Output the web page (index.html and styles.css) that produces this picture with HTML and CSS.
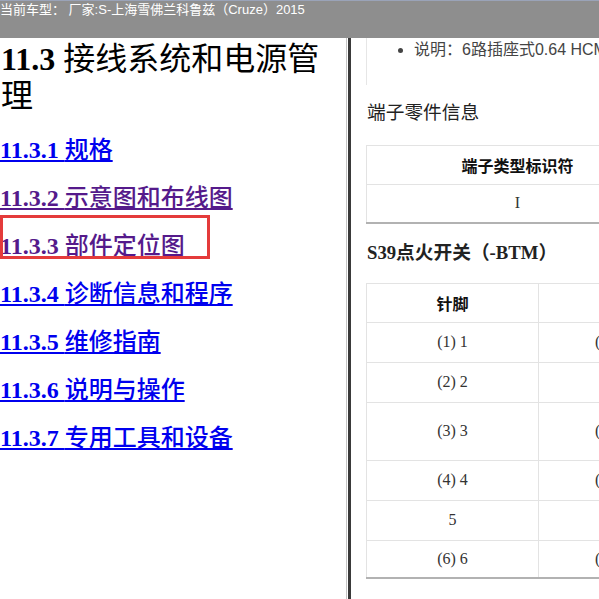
FILE: index.html
```html
<!DOCTYPE html>
<html lang="zh-CN">
<head>
    <meta charset="UTF-8">
    <title>维修手册 - 11.3 接线系统和电源管理</title>
    <link rel="stylesheet" href="styles.css">
</head>
<body>

    <div class="topbar">当前车型： 厂家:S-上海雪佛兰科鲁兹（Cruze）2015</div>

    <div class="main">
        <div class="left">
            <h1>11.3 <span class="zh">接线系统和电源管理</span></h1>
            <h2><a href="#" class="link">11.3.1 <span class="zh">规格</span></a></h2>
            <h2><a href="#" class="link visited">11.3.2 <span class="zh">示意图和布线图</span></a></h2>
            <h2><a href="#" class="link visited">11.3.3 <span class="zh">部件定位图</span></a></h2>
            <h2><a href="#" class="link">11.3.4 <span class="zh">诊断信息和程序</span></a></h2>
            <h2><a href="#" class="link">11.3.5 <span class="zh">维修指南</span></a></h2>
            <h2><a href="#" class="link">11.3.6 <span class="zh">说明与操作</span></a></h2>
            <h2><a href="#" class="link">11.3.7 <span class="zh">专用工具和设备</span></a></h2>

            <div class="mark"></div>
        </div>

        <div class="splitter"></div>

        <div class="right">
            <div class="spec">
                <ul>
                    <li>说明：6路插座式0.64 HCM 密封型连接器</li>
                </ul>
            </div>

            <h3 class="part-title">端子零件信息</h3>
            <table class="terminals">
                <thead>
                    <tr class="row-h">
                        <th class="c1">端子类型标识符</th>
                        <th>选装件</th>
                    </tr>
                </thead>
                <tbody>
                    <tr class="row-last">
                        <td>I</td>
                        <td>-</td>
                    </tr>
                </tbody>
            </table>

            <h3 class="conn-title">S39点火开关（-BTM）</h3>
            <table class="pins">
                <thead>
                    <tr class="row-h">
                        <th class="c1">针脚</th>
                        <th>线路</th>
                    </tr>
                </thead>
                <tbody>
                    <tr class="row">
                        <td>(1) 1</td>
                        <td class="desc">(5) 0.35</td>
                    </tr>
                    <tr class="row">
                        <td>(2) 2</td>
                        <td></td>
                    </tr>
                    <tr class="row-tall">
                        <td>(3) 3</td>
                        <td class="desc">(5) 0.5</td>
                    </tr>
                    <tr class="row">
                        <td>(4) 4</td>
                        <td class="desc">(5) 0.35</td>
                    </tr>
                    <tr class="row">
                        <td>5</td>
                        <td></td>
                    </tr>
                    <tr class="row-last">
                        <td>(6) 6</td>
                        <td class="desc">(5) 0.35</td>
                    </tr>
                </tbody>
            </table>
        </div>
    </div>

</body>
</html>
```

FILE: styles.css
```css
/* General */
* {
    box-sizing: border-box;
}

body {
    margin: 0;
    height: 599px;
    overflow: hidden;
    background: #ffffff;
    font-family: "Liberation Serif", "Noto Sans CJK SC", serif;
}

/* Top bar */
.topbar {
    height: 38px;
    background-color: #8e8e8e;
    border-top: 1px solid #9aa3b8;
    color: #ffffff;
    font-family: "Liberation Sans", "Noto Sans CJK SC", sans-serif;
    font-size: 13px;
    line-height: 15px;
    padding-top: 1px;
    white-space: nowrap;
}

.main {
    display: flex;
    height: 561px;
}

/* Left pane - chapter menu */
.left {
    position: relative;
    width: 347px;
    flex-shrink: 0;
    padding-top: 3px;
    border-right: 1px solid #c4c4c4;
}

h1 {
    margin: 0 0 21px;
    font-size: 32px;
    line-height: 37px;
    font-weight: bold;
    color: #000;
    padding-left: 1px;
}

h1 .zh {
    font-weight: normal;
}

h2 {
    margin: 20px 0;
    font-size: 24px;
    line-height: 28px;
    font-weight: bold;
}

h2 .zh {
    font-weight: 500;
}

.link {
    color: #0000ee;
    text-decoration: underline;
}

.link.visited {
    color: #551a8b;
}

/* red highlight box drawn over the menu */
.mark {
    position: absolute;
    left: 0;
    top: 177px;
    width: 210px;
    height: 44px;
    border: 3px solid #e43b3b;
}

.splitter {
    width: 3px;
    margin-left: 1px;
    flex-shrink: 0;
    background-color: #3a3a3a;
}

/* Right pane - content */
.right {
    flex: 1;
    overflow: hidden;
    padding-left: 15px;
    color: #222;
}

.spec {
    height: 47px;
    border-left: 1px solid #e6e6e6;
}

.spec ul {
    margin: 0;
    padding: 3px 0 0 47px;
    white-space: nowrap;
}

.spec li {
    font-family: "Liberation Sans", "Noto Sans CJK SC", sans-serif;
    font-size: 16px;
    line-height: 18px;
    color: #444;
}

h3 {
    font-size: 18.72px;
    line-height: 24px;
    white-space: nowrap;
    padding-left: 1px;
}

.part-title {
    margin: 16px 0 20px;
    font-weight: normal;
}

.conn-title {
    margin: 17px 0 18px;
    font-weight: bold;
}

/* Tables */
table {
    border-collapse: collapse;
    table-layout: fixed;
    border-bottom: 2px solid #b2b2b2;
}

.terminals {
    width: 560px;
}

.terminals .c1 {
    width: 302px;
}

.pins {
    width: 472px;
}

.pins .c1 {
    width: 172px;
}

th, td {
    border: 1px solid #e3e3e3;
    text-align: center;
    font-size: 16px;
    padding: 0;
}

th {
    font-weight: bold;
    color: #111;
}

td {
    color: #333;
}

td.desc {
    text-align: left;
    padding-left: 56px;
}

.row-h {
    height: 39px;
}

.row {
    height: 40px;
}

.row-tall {
    height: 58px;
}

.row-last {
    height: 38px;
}
```
